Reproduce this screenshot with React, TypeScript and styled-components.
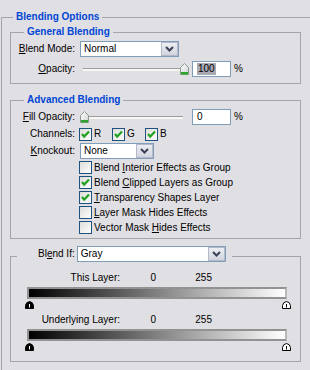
import React from 'react';
import styled, { createGlobalStyle } from 'styled-components';

const GlobalStyle = createGlobalStyle`
  html, body {
    margin: 0;
    padding: 0;
    overflow: hidden;
    background: #e0dfe3;
  }
  body {
    font-family: 'Liberation Sans', Arial, sans-serif;
    font-size: 10px;
    line-height: 12px;
    color: #000;
  }
`;

const Panel = styled.fieldset`
  margin: 11px 0 0 1px;
  padding: 3px 0 40px 8px;
  width: 340px;
  border: 1px solid #a5a5a9;
  min-inline-size: 0;
`;

const Group = styled.fieldset<{ $top: number; $bottom: number }>`
  margin: ${(p) => p.$top}px 0 0 0;
  padding: 0 0 ${(p) => p.$bottom}px 0;
  width: 291px;
  box-sizing: border-box;
  border: 1px solid #a5a5a9;
  min-inline-size: 0;
`;

const Legend = styled.legend<{ $indent: number }>`
  margin-left: ${(p) => p.$indent}px;
  padding: 0 3px;
  height: 12px;
  line-height: 12px;
  font-weight: bold;
  color: #0046d5;
`;

const IfLegend = styled.legend`
  margin-left: 6px;
  padding: 0 6px 0 21px;
  height: 20px;
  display: flex;
  align-items: flex-start;
  gap: 2px;
`;

const FormGrid = styled.div<{ $rows: string; $gap: number; $top: number }>`
  display: grid;
  grid-template-columns: 64px auto;
  grid-template-rows: ${(p) => p.$rows};
  row-gap: ${(p) => p.$gap}px;
  column-gap: 5px;
  align-items: center;
  justify-items: start;
  padding-top: ${(p) => p.$top}px;
`;

const Label = styled.span`
  justify-self: end;
  white-space: nowrap;
  line-height: 16px;
`;

const Key = styled.u`
  text-decoration: underline;
`;

const SelectBox = styled.div<{ $w: number }>`
  width: ${(p) => p.$w}px;
  height: 16px;
  box-sizing: border-box;
  border: 1px solid #7f9db9;
  background: #fff;
  display: flex;
  align-items: center;
  justify-content: space-between;
  padding-left: 3px;
`;

const DropButton = styled.span`
  width: 17px;
  height: 14px;
  box-sizing: border-box;
  border: 1px solid #b4b9c9;
  background: linear-gradient(#eceef3, #d2d5df);
  display: flex;
  align-items: center;
  justify-content: center;
`;

const ControlRow = styled.div`
  display: flex;
  align-items: center;
`;

const Slider = styled.div<{ $end: boolean }>`
  width: 109px;
  height: 12px;
  display: flex;
  justify-content: ${(p) => (p.$end ? 'flex-end' : 'flex-start')};
  background:
    linear-gradient(#9d9da1, #9d9da1) 3px 5px / 100px 1px no-repeat,
    linear-gradient(#f8f7f1, #f8f7f1) 3px 6px / 100px 2px no-repeat;
`;

const NumberBox = styled.div`
  margin-left: 3px;
  width: 39px;
  height: 16px;
  box-sizing: border-box;
  border: 1px solid #7f9db9;
  background: #fff;
  padding-left: 4px;
  display: flex;
  align-items: center;
`;

const Selected = styled.span`
  background: #a9a9b4;
  padding: 0 1px;
`;

const Percent = styled.span`
  margin-left: 3px;
`;

const Channels = styled.div`
  display: flex;
  margin-left: -1px;
`;

const ChannelItem = styled.div`
  width: 33px;
  display: flex;
  align-items: center;
  gap: 2px;
`;

const CheckList = styled.div`
  grid-column: 2;
  align-self: start;
  margin: 2px 0 0 -1px;
  display: flex;
  flex-direction: column;
  gap: 2px;
`;

const CheckRow = styled.div`
  height: 13px;
  display: flex;
  align-items: center;
  gap: 2px;
  white-space: nowrap;
`;

const IfLabel = styled.span`
  line-height: 16px;
`;

const Levels = styled.div`
  padding-top: 6px;
`;

const LevelBlock = styled.div<{ $top: number }>`
  margin-top: ${(p) => p.$top}px;
`;

const LevelLabels = styled.div`
  display: grid;
  grid-template-columns: 109px 36px 56px;
  justify-items: end;
  line-height: 12px;
`;

const Bar = styled.div`
  margin: 3px 0 0 16px;
  width: 260px;
  height: 12px;
  box-sizing: border-box;
  border: 2px solid #929292;
  border-right-color: #b8b8b8;
  background: linear-gradient(to right, #000, #5a5a5a 35%, #a8a8a8 65%, #fff);
`;

const Thumbs = styled.div`
  margin: 2px 0 0 14px;
  width: 266px;
  height: 8px;
  display: flex;
  justify-content: space-between;
`;

const Chevron = () => (
  <svg width="9" height="6" viewBox="0 0 9 6">
    <path d="M1 1 L4.5 4.5 L8 1" fill="none" stroke="#3a4255" strokeWidth="2" />
  </svg>
);

const Select = ({ w, value }: { w: number; value: string }) => (
  <SelectBox $w={w}>
    <span>{value}</span>
    <DropButton>
      <Chevron />
    </DropButton>
  </SelectBox>
);

const SliderThumb = () => (
  <svg width="9" height="12" viewBox="0 0 9 12">
    <defs>
      <linearGradient id="thumbFill" x1="0" y1="0" x2="1" y2="1">
        <stop offset="0" stopColor="#ffffff" />
        <stop offset="1" stopColor="#cfd0d4" />
      </linearGradient>
    </defs>
    <polygon points="0.5,11.5 0.5,4.5 4.5,0.5 8.5,4.5 8.5,11.5" fill="url(#thumbFill)" stroke="#8a9a8a" />
    <rect x="1" y="9" width="7" height="2.5" fill="#2fa52f" />
  </svg>
);

const Check = ({ on }: { on?: boolean }) => (
  <svg width="13" height="13" viewBox="0 0 13 13">
    <defs>
      <linearGradient id="boxFill" x1="0" y1="0" x2="1" y2="1">
        <stop offset="0" stopColor="#dcdcd7" />
        <stop offset="1" stopColor="#ffffff" />
      </linearGradient>
    </defs>
    <rect x="0.5" y="0.5" width="12" height="12" fill="url(#boxFill)" stroke="#1c5180" />
    {on && <polyline points="3,6 5.2,8.6 10,3.6" fill="none" stroke="#21a121" strokeWidth="2.2" />}
  </svg>
);

const LevelThumb = ({ dark }: { dark?: boolean }) => (
  <svg width="9" height="8" viewBox="0 0 9 8">
    <path
      d="M0.5 7.5 L0.5 4.5 Q1 1 4.5 0.5 Q8 1 8.5 4.5 L8.5 7.5 Z"
      fill={dark ? '#000' : '#fff'}
      stroke="#000"
    />
    <rect x="4" y="3" width="1" height="3.5" fill={dark ? '#fff' : '#000'} />
  </svg>
);

const checks = [
  { pre: 'Blend ', key: 'I', post: 'nterior Effects as Group', on: false },
  { pre: 'Blend ', key: 'C', post: 'lipped Layers as Group', on: true },
  { pre: '', key: 'T', post: 'ransparency Shapes Layer', on: true },
  { pre: '', key: 'L', post: 'ayer Mask Hides Effects', on: false },
  { pre: 'Vector Mask ', key: 'H', post: 'ides Effects', on: false },
];

export default function App() {
  return (
    <>
      <GlobalStyle />
      <Panel>
        <Legend $indent={3}>Blending Options</Legend>

        <Group $top={0} $bottom={6}>
          <Legend $indent={13}>General Blending</Legend>
          <FormGrid $rows="16px 17px" $gap={3} $top={3}>
            <Label>
              <Key>B</Key>lend Mode:
            </Label>
            <Select w={99} value="Normal" />
            <Label>
              <Key>O</Key>pacity:
            </Label>
            <ControlRow>
              <Slider $end>
                <SliderThumb />
              </Slider>
              <NumberBox>
                <Selected>100</Selected>
              </NumberBox>
              <Percent>%</Percent>
            </ControlRow>
          </FormGrid>
        </Group>

        <Group $top={10} $bottom={4}>
          <Legend $indent={13}>Advanced Blending</Legend>
          <FormGrid $rows="17px 18px 16px auto" $gap={0} $top={2}>
            <Label>
              <Key>F</Key>ill Opacity:
            </Label>
            <ControlRow>
              <Slider $end={false}>
                <SliderThumb />
              </Slider>
              <NumberBox>0</NumberBox>
              <Percent>%</Percent>
            </ControlRow>
            <Label>Channels:</Label>
            <Channels>
              {['R', 'G', 'B'].map((c) => (
                <ChannelItem key={c}>
                  <Check on />
                  <span>{c}</span>
                </ChannelItem>
              ))}
            </Channels>
            <Label>
              <Key>K</Key>nockout:
            </Label>
            <Select w={74} value="None" />
            <CheckList>
              {checks.map((c) => (
                <CheckRow key={c.key}>
                  <Check on={c.on} />
                  <span>
                    {c.pre}
                    <Key>{c.key}</Key>
                    {c.post}
                  </span>
                </CheckRow>
              ))}
            </CheckList>
          </FormGrid>
        </Group>

        <Group $top={7} $bottom={10}>
          <IfLegend>
            <IfLabel>
              Bl<Key>e</Key>nd If:
            </IfLabel>
            <Select w={149} value="Gray" />
          </IfLegend>
          <Levels>
            <LevelBlock $top={0}>
              <LevelLabels>
                <span>This Layer:</span>
                <span>0</span>
                <span>255</span>
              </LevelLabels>
              <Bar />
              <Thumbs>
                <LevelThumb dark />
                <LevelThumb />
              </Thumbs>
            </LevelBlock>
            <LevelBlock $top={5}>
              <LevelLabels>
                <span>Underlying Layer:</span>
                <span>0</span>
                <span>255</span>
              </LevelLabels>
              <Bar />
              <Thumbs>
                <LevelThumb dark />
                <LevelThumb />
              </Thumbs>
            </LevelBlock>
          </Levels>
        </Group>
      </Panel>
    </>
  );
}
